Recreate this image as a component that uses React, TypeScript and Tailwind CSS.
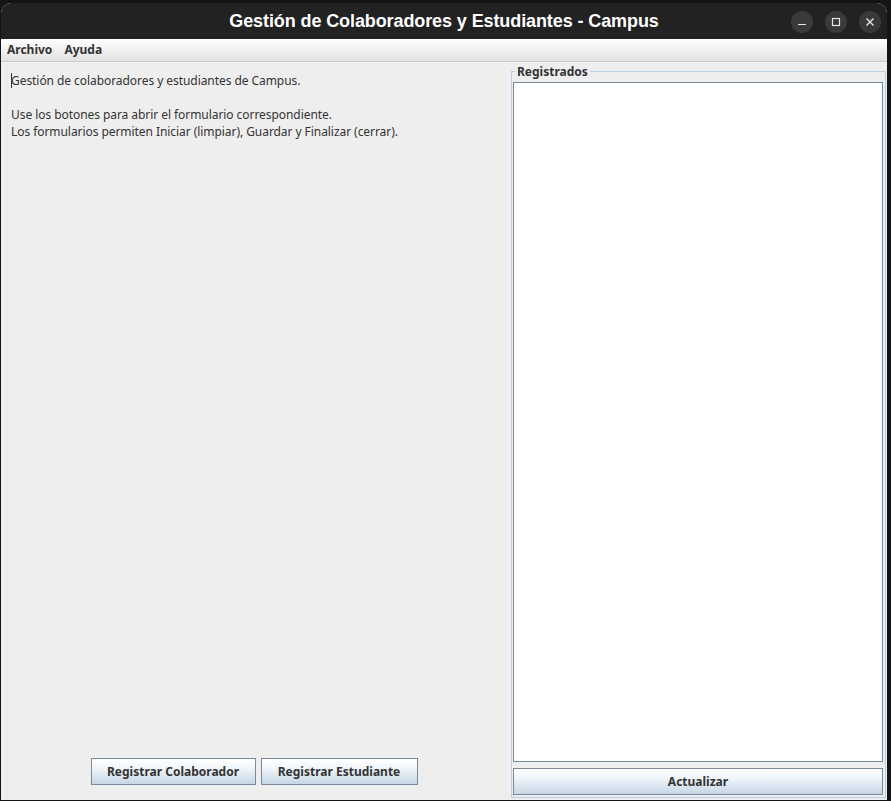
import React from "react";

const btn =
  "h-[27px] border border-[#7a8a99] bg-[linear-gradient(to_bottom,#ffffff_0%,#f2f6fa_35%,#c6d6e6_100%)] text-[12px] font-bold text-[#333333] flex items-center justify-center";

export default function App() {
  return (
    <div
      className="w-[891px] h-[801px] bg-[#141414] overflow-hidden pt-[3px] pl-[1px]"
      style={{ fontFamily: '"Noto Sans", sans-serif' }}
    >
      <div className="w-[886px] h-[797px] flex flex-col rounded-t-[10px] overflow-hidden bg-[#eeeeee]">
        {/* Title bar */}
        <div className="h-[36px] bg-[#222222] relative flex items-center justify-center shrink-0">
          <div
            className="text-white text-[18px] font-bold tracking-[-0.1px]"
            style={{ fontFamily: '"Liberation Sans", Arial, sans-serif' }}
          >
            Gestión de Colaboradores y Estudiantes - Campus
          </div>
          <div className="absolute right-[6px] top-[8px] flex gap-[12px]">
            <div className="w-[22px] h-[22px] rounded-full bg-[#3a3a3a] flex items-center justify-center">
              <svg width="10" height="10" viewBox="0 0 10 10">
                <path d="M1 7.5h8" stroke="#e6e6e6" strokeWidth="1.2" />
              </svg>
            </div>
            <div className="w-[22px] h-[22px] rounded-full bg-[#3a3a3a] flex items-center justify-center">
              <svg width="10" height="10" viewBox="0 0 10 10">
                <rect x="1.5" y="1.5" width="7" height="7" fill="none" stroke="#e6e6e6" strokeWidth="1.2" />
              </svg>
            </div>
            <div className="w-[22px] h-[22px] rounded-full bg-[#3a3a3a] flex items-center justify-center">
              <svg width="10" height="10" viewBox="0 0 10 10">
                <path d="M1.5 1.5l7 7M8.5 1.5l-7 7" stroke="#e6e6e6" strokeWidth="1.4" />
              </svg>
            </div>
          </div>
        </div>

        {/* Menu bar */}
        <div className="h-[23px] shrink-0 border-b border-[#c9c9c9] bg-[linear-gradient(to_bottom,#ffffff,#e2e2e2)] flex items-center text-[12px] font-bold text-[#333333]">
          <span className="px-[6px]">Archivo</span>
          <span className="px-[6px]">Ayuda</span>
        </div>

        {/* Content */}
        <div className="flex-1 flex min-h-0">
          {/* Left column */}
          <div className="w-[508px] flex flex-col">
            <div className="flex-1 pl-[10px] pt-[10px] text-[12px] leading-[17px] tracking-[-0.06px] text-[#333333]">
              <div className="flex items-center">
                <span className="inline-block w-px h-[15px] bg-[#333333] -mr-px" />
                <span>Gestión de colaboradores y estudiantes de Campus.</span>
              </div>
              <div className="h-[17px]" />
              <div>Use los botones para abrir el formulario correspondiente.</div>
              <div>Los formularios permiten Iniciar (limpiar), Guardar y Finalizar (cerrar).</div>
            </div>
            <div className="flex justify-center gap-[5px] pb-[15px] pr-[2px]">
              <button className={`${btn} w-[165px]`}>Registrar Colaborador</button>
              <button className={`${btn} w-[157px]`}>Registrar Estudiante</button>
            </div>
          </div>

          {/* Right column */}
          <div className="flex-1 pl-[2px] pr-[1px] pt-[9px] pb-[2px] flex">
            <div className="relative flex-1 border border-[#b8cfe5] flex flex-col pt-[10px] pl-[1px] pr-[2px] pb-[2px] gap-[6px]">
              <span className="absolute left-[3px] top-[-9px] px-[2px] bg-[#eeeeee] text-[12px] leading-[17px] font-bold text-[#333333]">
                Registrados
              </span>
              <div className="flex-1 bg-white border border-[#7a8a99]" />
              <button className={`${btn} w-full`}>Actualizar</button>
            </div>
          </div>
        </div>
      </div>
    </div>
  );
}
